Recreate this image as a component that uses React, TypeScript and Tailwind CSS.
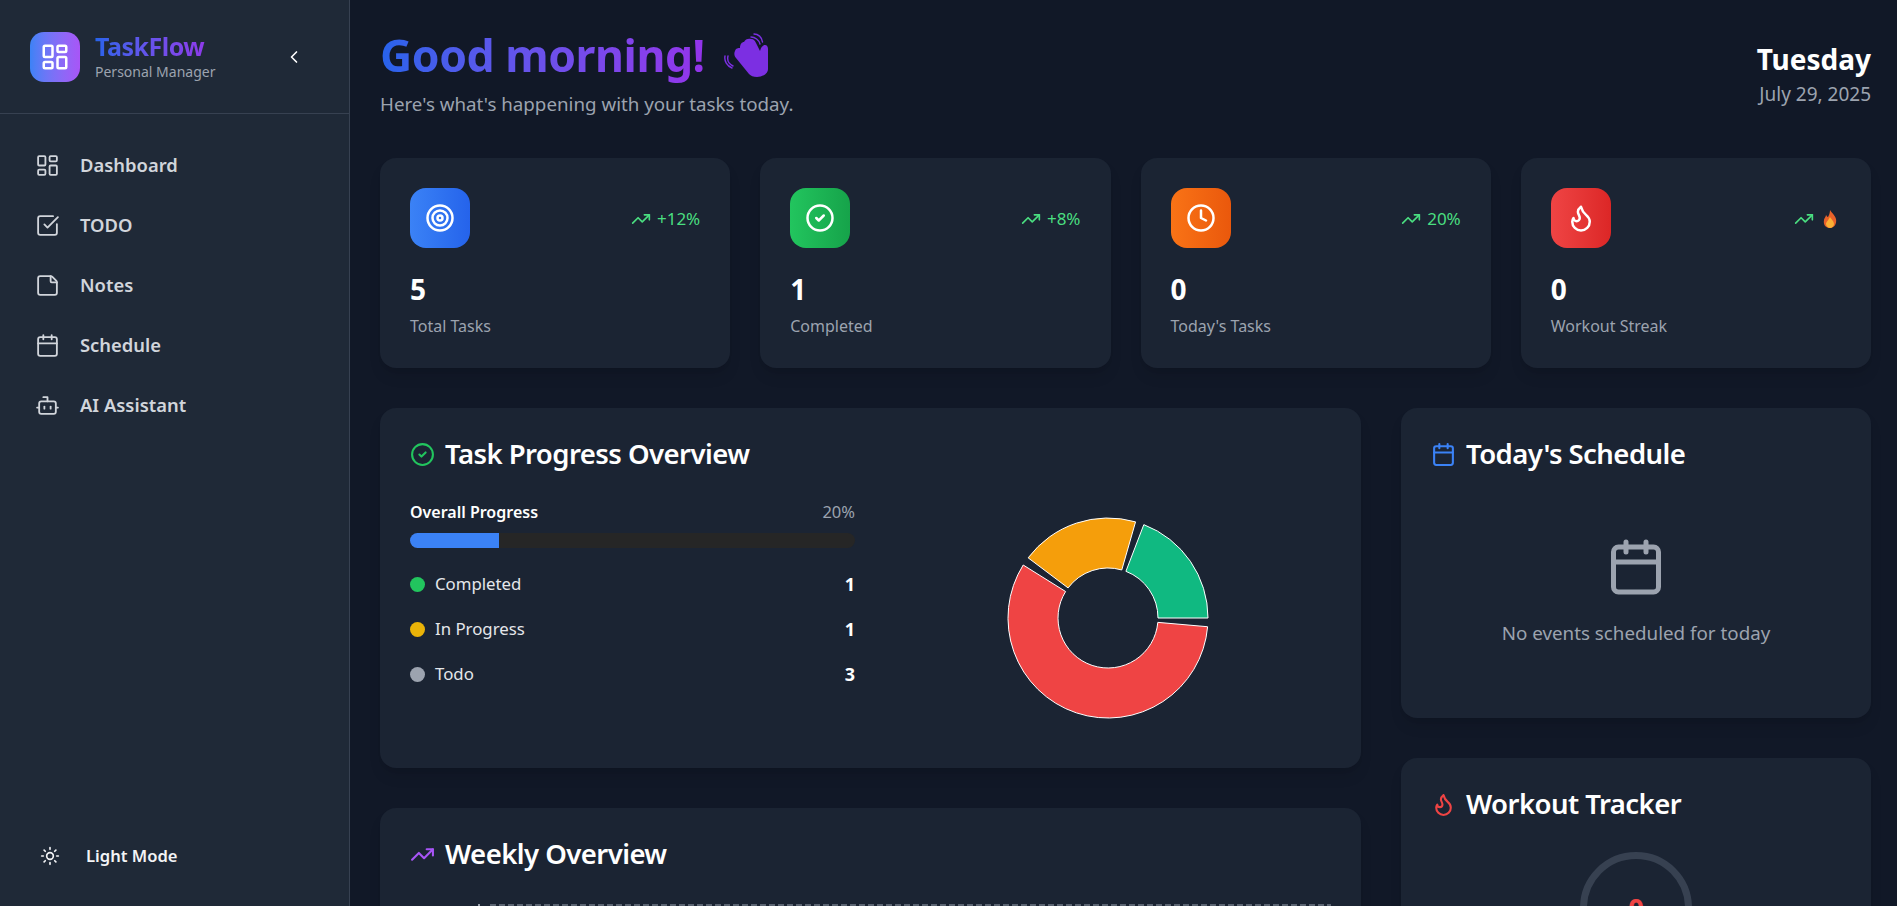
import {
  Bot,
  Calendar,
  ChevronLeft,
  CircleCheck,
  Clock,
  Flame,
  LayoutDashboard,
  SquareCheckBig,
  StickyNote,
  Sun,
  Target,
  TrendingUp,
} from "lucide-react";

const font = { fontFamily: '"Noto Sans", sans-serif' };

const navItems = [
  { label: "Dashboard", icon: LayoutDashboard },
  { label: "TODO", icon: SquareCheckBig },
  { label: "Notes", icon: StickyNote },
  { label: "Schedule", icon: Calendar },
  { label: "AI Assistant", icon: Bot },
];

const progressRows = [
  { label: "Completed", value: 1, dot: "bg-[#22c55e]" },
  { label: "In Progress", value: 1, dot: "bg-[#eab308]" },
  { label: "Todo", value: 3, dot: "bg-[#9ca3af]" },
];

function polar(r: number, deg: number) {
  const a = (deg * Math.PI) / 180;
  return `${(110 + r * Math.cos(a)).toFixed(2)} ${(110 - r * Math.sin(a)).toFixed(2)}`;
}

function slice(from: number, to: number) {
  const large = to - from > 180 ? 1 : 0;
  return `M${polar(100, from)} A100 100 0 ${large} 0 ${polar(100, to)} L${polar(50, to)} A50 50 0 ${large} 1 ${polar(50, from)} Z`;
}

function Donut() {
  return (
    <svg width="220" height="220" viewBox="0 0 220 220">
      <path d={slice(0, 69)} fill="#10b981" stroke="#fff" strokeWidth="1" />
      <path d={slice(74, 143)} fill="#f59e0b" stroke="#fff" strokeWidth="1" />
      <path d={slice(148, 355)} fill="#ef4444" stroke="#fff" strokeWidth="1" />
    </svg>
  );
}

function WaveHand() {
  return (
    <svg width="45" height="45" viewBox="0 0 45 45" fill="none">
      <path
        d="M11 18C12 15 14 15 16 15C16 11 18 9 20 9C21 6 25 5 27 6C30 6 31 8 32 10L36 18C37 14 39 12 41 12C43 12 44 14 44 16L44 36C44 41 38 44 33 44C29 44 27 43 25 41L12 25C10 23 10 20 11 18Z"
        fill="#7c2fe2"
      />
      <path d="M27 4C31 4 35 7 36 11M30 1C34 1 38 4 38.5 9" stroke="#7c2fe2" strokeWidth="1.4" strokeLinecap="round" />
      <path d="M4 23C3 27 5 31 9 33M1 23C0 28 3 33 8 35" stroke="#7c2fe2" strokeWidth="1.4" strokeLinecap="round" />
    </svg>
  );
}

function FireEmoji() {
  return (
    <svg className="ml-[3px] mr-[4px]" width="14" height="18" viewBox="0 0 14 18">
      <path d="M7 0c1 2 5 5 6 9 1 5-2 9-6 9s-7-3-6-8c0-2 2-3 2-5 1 1 1 2 2 2 1-2 2-4 2-7z" fill="#e8622a" />
      <path d="M7 7c1 2 4 4 4 7 0 2-2 4-4 4s-4-2-4-4c0-2 2-3 4-7z" fill="#fbb034" />
    </svg>
  );
}

function StatCard({
  icon: Icon,
  gradient,
  trend,
  value,
  label,
}: {
  icon: typeof Target;
  gradient: string;
  trend: React.ReactNode;
  value: number;
  label: string;
}) {
  return (
    <div className="h-[210px] rounded-2xl bg-[#1b2433] p-[30px] shadow-lg">
      <div className="flex items-center justify-between">
        <div className={`flex h-[60px] w-[60px] items-center justify-center rounded-2xl ${gradient}`}>
          <Icon className="h-[30px] w-[30px] text-white" />
        </div>
        <div className="mt-[2px] flex items-center gap-1.5 text-[17px] leading-6 text-[#4ade80]">
          <TrendingUp className="h-5 w-5" />
          {trend}
        </div>
      </div>
      <div className="mt-[23px] text-[28px] font-bold leading-9 text-white">{value}</div>
      <div className="mt-[7px] text-base leading-6 text-[#9ca3af]">{label}</div>
    </div>
  );
}

function CardTitle({ icon: Icon, color, children }: { icon: typeof Target; color: string; children: string }) {
  return (
    <h2 className="-mt-[2px] flex items-center gap-[10px] text-[27.5px] font-semibold leading-9 tracking-[-0.02em] text-white">
      <Icon className={`h-[25px] w-[25px] ${color}`} />
      {children}
    </h2>
  );
}

export default function App() {
  return (
    <div className="flex h-screen overflow-hidden bg-[#111827]" style={font}>
      <aside className="flex w-[350px] shrink-0 flex-col border-r border-[#374151] bg-[#1f2937]">
        <div className="flex h-[114px] items-center justify-between border-b border-[#374151] pl-[30px] pr-[45px]">
          <div className="flex items-center gap-[15px]">
            <div className="flex h-[50px] w-[50px] items-center justify-center rounded-[14px] bg-gradient-to-r from-[#3b82f6] to-[#a855f7]">
              <LayoutDashboard className="h-[30px] w-[30px] text-white" />
            </div>
            <div>
              <div className="bg-gradient-to-r from-[#2563eb] to-[#9333ea] bg-clip-text text-[25px] font-bold leading-7 tracking-[-0.02em] text-transparent">
                TaskFlow
              </div>
              <div className="mt-0.5 text-sm leading-5 text-[#9ca3af]">Personal Manager</div>
            </div>
          </div>
          <ChevronLeft className="h-5 w-5 text-white" />
        </div>
        <nav className="flex flex-col pt-[21px]">
          {navItems.map((item) => (
            <div key={item.label} className="flex h-[60px] items-center gap-[20px] pl-[35px] text-[#d1d5db]">
              <item.icon className="h-[25px] w-[25px]" strokeWidth={1.75} />
              <span className="text-[18.4px] font-semibold">{item.label}</span>
            </div>
          ))}
        </nav>
        <div className="mb-[22px] mt-auto flex h-[56px] items-center gap-[26px] pl-[40px] text-[#f3f4f6]">
          <Sun className="h-5 w-5" />
          <span className="text-[16.6px] font-semibold">Light Mode</span>
        </div>
      </aside>

      <main className="min-w-0 flex-1 overflow-hidden pl-[30px] pr-[26px] pt-[25px]">
        <header className="flex h-[133px] items-start justify-between">
          <div>
            <h1 className="flex items-center gap-[19px] text-[44.5px] font-bold leading-[60px] tracking-[-0.01em]">
              <span className="bg-gradient-to-r from-[#2563eb] to-[#9333ea] bg-clip-text text-transparent">
                Good morning!
              </span>
              <WaveHand />
            </h1>
            <p className="mt-[5px] text-[18.75px] leading-7 text-[#9ca3af]">Here's what's happening with your tasks today.</p>
          </div>
          <div className="pt-[16px] text-right">
            <div className="text-[28px] font-bold leading-9 text-white">Tuesday</div>
            <div className="mt-[3px] text-[19px] leading-7 text-[#9ca3af]">July 29, 2025</div>
          </div>
        </header>

        <section className="grid grid-cols-4 gap-[30px]">
          <StatCard icon={Target} gradient="bg-gradient-to-r from-[#3b82f6] to-[#2563eb]" trend="+12%" value={5} label="Total Tasks" />
          <StatCard icon={CircleCheck} gradient="bg-gradient-to-r from-[#22c55e] to-[#16a34a]" trend="+8%" value={1} label="Completed" />
          <StatCard icon={Clock} gradient="bg-gradient-to-r from-[#f97316] to-[#ea580c]" trend="20%" value={0} label="Today's Tasks" />
          <StatCard icon={Flame} gradient="bg-gradient-to-r from-[#ef4444] to-[#dc2626]" trend={<FireEmoji />} value={0} label="Workout Streak" />
        </section>

        <section className="mt-10 grid grid-cols-[981px_470px] gap-10">
          <div className="flex flex-col gap-10">
            <div className="h-[360px] rounded-2xl bg-[#1b2433] p-[30px] shadow-lg">
              <CardTitle icon={CircleCheck} color="text-[#22c55e]">Task Progress Overview</CardTitle>
              <div className="mt-[28px] grid grid-cols-[445px_1fr] gap-[30px]">
                <div>
                  <div className="flex items-center justify-between text-base leading-6">
                    <span className="font-semibold text-white">Overall Progress</span>
                    <span className="text-[16.5px] text-[#9ca3af]">20%</span>
                  </div>
                  <div className="mt-[9px] h-[15px] overflow-hidden rounded-full bg-[#262626]">
                    <div className="h-full w-[20%] bg-[#3b82f6]" />
                  </div>
                  <div className="mt-[24px] flex flex-col gap-[21px]">
                    {progressRows.map((row) => (
                      <div key={row.label} className="flex h-6 items-center justify-between text-[#e5e7eb]">
                        <span className="flex items-center gap-[10px] text-[16.8px] leading-6">
                          <span className={`h-[15px] w-[15px] rounded-full ${row.dot}`} />
                          {row.label}
                        </span>
                        <span className="text-lg font-bold leading-6 text-white">{row.value}</span>
                      </div>
                    ))}
                  </div>
                </div>
                <div className="flex justify-center pt-[8px]">
                  <Donut />
                </div>
              </div>
            </div>
            <div className="h-[400px] rounded-2xl bg-[#1b2433] p-[30px] shadow-lg">
              <CardTitle icon={TrendingUp} color="text-[#a855f7]">Weekly Overview</CardTitle>
              <svg className="ml-[68px] mt-[32px] block" width="853" height="2" viewBox="0 0 853 2">
                <line x1="0" y1="1" x2="2" y2="1" stroke="#9ca3af" strokeWidth="2" />
                <line x1="12" y1="1" x2="853" y2="1" stroke="#5b6472" strokeWidth="2" strokeDasharray="6 3" />
              </svg>
            </div>
          </div>

          <div className="flex flex-col gap-10">
            <div className="h-[310px] rounded-2xl bg-[#1b2433] p-[30px] shadow-lg">
              <CardTitle icon={Calendar} color="text-[#3b82f6]">Today's Schedule</CardTitle>
              <div className="mt-[65px] flex flex-col items-center">
                <Calendar className="h-[60px] w-[60px] text-[#9ca3af]" />
                <p className="mt-[22px] text-[18.8px] leading-7 text-[#9ca3af]">No events scheduled for today</p>
              </div>
            </div>
            <div className="h-[400px] rounded-2xl bg-[#1b2433] p-[30px] shadow-lg">
              <CardTitle icon={Flame} color="text-[#ef4444]">Workout Tracker</CardTitle>
              <div className="mt-[30px] flex justify-center">
                <div className="flex h-[112px] w-[112px] items-start justify-center rounded-full border-[7px] border-[#374151] pt-[32px] text-[28px] font-bold leading-9 text-[#ef4444]">
                  0
                </div>
              </div>
            </div>
          </div>
        </section>
      </main>
    </div>
  );
}
